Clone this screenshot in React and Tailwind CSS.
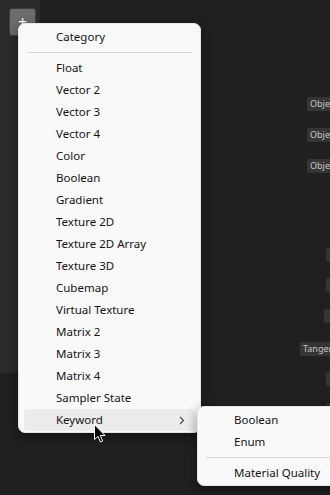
import React from "react";

const items = [
  "Float",
  "Vector 2",
  "Vector 3",
  "Vector 4",
  "Color",
  "Boolean",
  "Gradient",
  "Texture 2D",
  "Texture 2D Array",
  "Texture 3D",
  "Cubemap",
  "Virtual Texture",
  "Matrix 2",
  "Matrix 3",
  "Matrix 4",
  "Sampler State",
];

const font = { fontFamily: "'Noto Sans', 'Open Sans', sans-serif" };

function Tag({ top, left, label }) {
  return (
    <div
      className="absolute h-[14px] w-[40px] bg-[#353535] text-[#c6c6c6] text-[9px] leading-[14px] pl-[3px] rounded-l-[2px] whitespace-nowrap"
      style={{ top, left }}
    >
      {label}
    </div>
  );
}

function Row({ children, active, sub }) {
  return (
    <div
      className={
        "h-[22px] flex items-center pr-[10px] rounded-[4px] " +
        (sub ? "pl-[31px] " : "pl-[32px] ") +
        (active ? "bg-[#ececec]" : "")
      }
    >
      <span className="flex-1 whitespace-nowrap">{children}</span>
      {active && (
        <svg width="6" height="9" viewBox="0 0 6 9">
          <path d="M1 1 L4.5 4.5 L1 8" fill="none" stroke="#444" strokeWidth="1.1" />
        </svg>
      )}
    </div>
  );
}

export default function App() {
  return (
    <div
      className="relative w-[330px] h-[495px] bg-[#202020] overflow-hidden"
      style={font}
    >
      <div className="flex">
        <div className="w-[40px] h-[373px] bg-[#2b2b2b] pt-[8px] pl-[9px]">
          <div className="w-[27px] h-[28px] bg-[#6c6c6c] border border-[#404040] rounded-[3px] flex items-center justify-center text-white text-[16px] leading-none">
            +
          </div>
        </div>
        <div className="flex-1" />
      </div>

      {/* canvas fragments of nodes off to the right */}
      <Tag top={97} left={307} label="Object" />
      <Tag top={128} left={307} label="Object" />
      <Tag top={159} left={307} label="Object" />
      <Tag top={248} left={326} label="" />
      <Tag top={278} left={326} label="" />
      <Tag top={309} left={324} label="" />
      <Tag top={342} left={300} label="Tangent" />
      <Tag top={372} left={326} label="" />
      <Tag top={403} left={326} label="" />

      {/* main menu */}
      <div className="absolute top-[23px] left-[18px] w-[183px] bg-[#f9f9f9] rounded-[7px] shadow-[0_4px_12px_rgba(0,0,0,0.45)] border border-[#e6e6e6] px-[5px] pt-[2px] pb-[1px] text-[11.5px] text-[#141414]">
        <Row>Category</Row>
        <div className="mt-[4px] mb-[4px] mx-[3px] h-px bg-[#d8d8d8]" />
        {items.map((it) => (
          <Row key={it}>{it}</Row>
        ))}
        <Row active>Keyword</Row>
      </div>

      {/* submenu */}
      <div className="absolute top-[406px] left-[197px] w-[150px] bg-[#f9f9f9] rounded-[7px] shadow-[0_4px_12px_rgba(0,0,0,0.45)] border border-[#e6e6e6] px-[5px] pt-[2px] pb-[1px] text-[11.5px] text-[#141414]">
        <Row sub>Boolean</Row>
        <Row sub>Enum</Row>
        <div className="mt-[4px] mb-[4px] mx-[3px] h-px bg-[#d8d8d8]" />
        <Row sub>Material Quality</Row>
      </div>

      {/* mouse cursor */}
      <svg
        className="absolute top-[424px] left-[94px]"
        width="13"
        height="19"
        viewBox="0 0 13 19"
      >
        <path
          d="M0.5 0.5 L0.5 15.5 L4 12.3 L6.5 18 L8.7 17 L6.3 11.5 L11 11.5 Z"
          fill="#000"
          stroke="#fff"
          strokeWidth="1"
          strokeLinejoin="round"
        />
      </svg>
    </div>
  );
}
